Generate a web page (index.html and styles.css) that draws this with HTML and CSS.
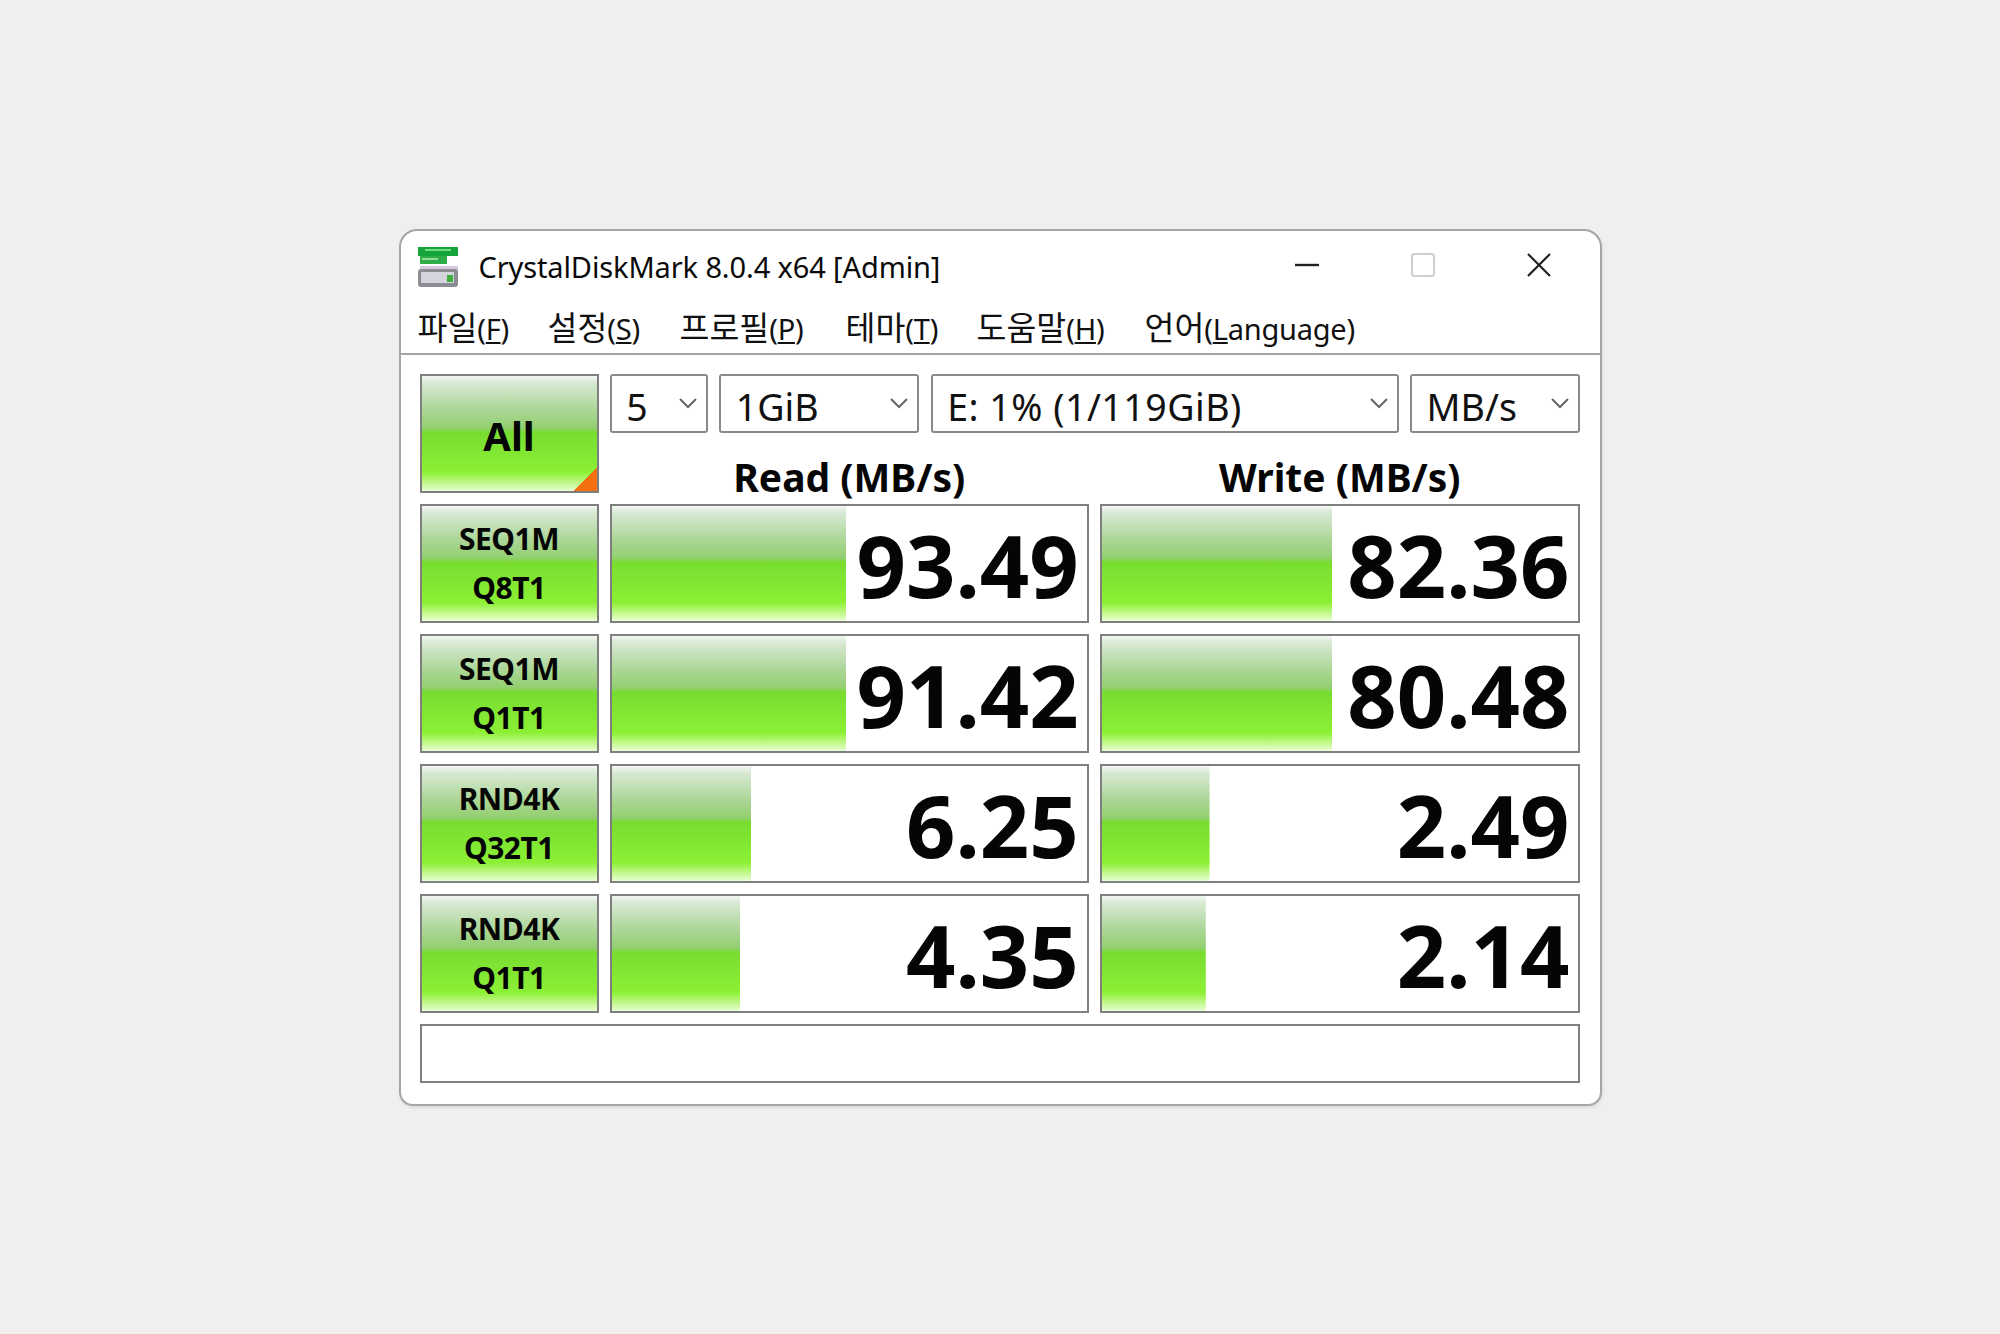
FILE: index.html
```html
<!DOCTYPE html>
<html lang="ko">
<head>
<meta charset="utf-8">
<title>CrystalDiskMark</title>
<link rel="stylesheet" href="styles.css">
</head>
<body>
<div class="window">
  <header class="titlebar">
    <svg class="app-icon" width="40" height="40" viewBox="0 0 40 40">
      <rect x="0" y="0" width="40" height="9" fill="#15a53a"/>
      <rect x="7" y="2" width="26" height="2" fill="#6fdc85"/>
      <rect x="2" y="9" width="27" height="8" fill="#2fae48"/>
      <rect x="4" y="11" width="16" height="2" fill="#8fdc98"/>
      <rect x="2" y="19" width="38" height="4" fill="#d8c8dc"/>
      <rect x="0" y="22" width="40" height="18" rx="3" fill="#8c8c94"/>
      <rect x="3" y="25" width="33" height="11" rx="1" fill="#d4d4dc"/>
      <rect x="29" y="28" width="6" height="7" fill="#3fae3f"/>
    </svg>
    <span class="title">CrystalDiskMark 8.0.4 x64 [Admin]</span>
    <div class="controls">
      <span class="ctl"><svg width="26" height="4" viewBox="0 0 26 4"><path d="M1 2H25" stroke="#222" stroke-width="2.4"/></svg></span>
      <span class="ctl"><svg width="26" height="26" viewBox="0 0 26 26"><rect x="2" y="2" width="22" height="22" rx="2.5" fill="none" stroke="#cfcfcf" stroke-width="2"/></svg></span>
      <span class="ctl"><svg width="26" height="26" viewBox="0 0 26 26"><path d="M2 2L24 24M24 2L2 24" stroke="#222" stroke-width="2.2" fill="none"/></svg></span>
    </div>
  </header>
  <nav class="menu">
    <span class="menu-item m1">파일<small>(<u>F</u>)</small></span>
    <span class="menu-item m2">설정<small>(<u>S</u>)</small></span>
    <span class="menu-item m3">프로필<small>(<u>P</u>)</small></span>
    <span class="menu-item m4">테마<small>(<u>T</u>)</small></span>
    <span class="menu-item m5">도움말<small>(<u>H</u>)</small></span>
    <span class="menu-item">언어<small>(<u>L</u>anguage)</small></span>
  </nav>
  <main class="panel">
    <div class="btn all">All</div>
    <div class="combos">
      <div class="combo c-count"><span>5</span><svg class="chev" width="20" height="12" viewBox="0 0 20 12"><path d="M2 2L10 10L18 2" fill="none" stroke="#666" stroke-width="2"/></svg></div>
      <div class="combo c-size"><span>1GiB</span><svg class="chev" width="20" height="12" viewBox="0 0 20 12"><path d="M2 2L10 10L18 2" fill="none" stroke="#666" stroke-width="2"/></svg></div>
      <div class="combo c-drive"><span>E: 1% (1/119GiB)</span><svg class="chev" width="20" height="12" viewBox="0 0 20 12"><path d="M2 2L10 10L18 2" fill="none" stroke="#666" stroke-width="2"/></svg></div>
      <div class="combo c-unit"><span>MB/s</span><svg class="chev" width="20" height="12" viewBox="0 0 20 12"><path d="M2 2L10 10L18 2" fill="none" stroke="#666" stroke-width="2"/></svg></div>
    </div>
    <div class="col-head">Read (MB/s)</div>
    <div class="col-head">Write (MB/s)</div>

    <div class="btn test">SEQ1M<br>Q8T1</div>
    <div class="cell" style="--fill:49.3%">93.49</div>
    <div class="cell" style="--fill:48.4%">82.36</div>

    <div class="btn test">SEQ1M<br>Q1T1</div>
    <div class="cell" style="--fill:49.3%">91.42</div>
    <div class="cell" style="--fill:48.4%">80.48</div>

    <div class="btn test">RND4K<br>Q32T1</div>
    <div class="cell" style="--fill:29.3%">6.25</div>
    <div class="cell" style="--fill:22.6%">2.49</div>

    <div class="btn test">RND4K<br>Q1T1</div>
    <div class="cell" style="--fill:27%">4.35</div>
    <div class="cell" style="--fill:21.8%">2.14</div>

    <div class="status"></div>
  </main>
</div>
</body>
</html>
```
FILE: styles.css
```css
:root {
  --glass: linear-gradient(180deg,
    #f2f7f2 0%, #d8e9d4 6%, #aed79a 28%, #93cf70 45%,
    #78dc30 49%, #80e632 65%, #8cf034 84%, #c4f88c 93%, #e8ffd4 100%);
}
* { box-sizing: border-box; }
html, body { height: 100%; }
body {
  margin: 0;
  background: #efefef;
  display: flex;
  align-items: center;
  justify-content: center;
  font-family: "Noto Sans", "Noto Sans CJK KR", sans-serif;
  color: #0a0a0a;
}
.window {
  width: 1203px;
  height: 877px;
  background: #fff;
  border: 2px solid #a6a6a6;
  border-radius: 18px 18px 14px 14px;
  box-shadow: 1px 2px 3px rgba(0, 0, 0, .08);
  display: flex;
  flex-direction: column;
  overflow: hidden;
}
.titlebar {
  height: 72px;
  flex: none;
  display: flex;
  align-items: center;
  padding-left: 17px;
}
.app-icon { flex: none; }
.title {
  margin-left: 21px;
  font-size: 29px;
  letter-spacing: -.12px;
  line-height: 40px;
  white-space: nowrap;
}
.controls { margin-left: auto; display: flex; padding-right: 3px; margin-top: -3px; }
.ctl {
  width: 116px;
  height: 50px;
  display: flex;
  align-items: center;
  justify-content: center;
}
.menu {
  height: 52px;
  flex: none;
  display: flex;
  align-items: center;
  padding: 0 0 4px 17px;
  border-bottom: 2px solid #a6a6a6;
  font-family: "Noto Sans CJK KR", "Noto Sans", sans-serif;
  font-size: 32.5px;
  color: #111;
}
.menu small {
  font-family: "Noto Sans", sans-serif;
  font-size: 29px;
  letter-spacing: -.25px;
}
.menu-item { white-space: nowrap; }
.m1 { width: 130px; }
.m2 { width: 132px; }
.m3 { width: 166px; }
.m4 { width: 131px; }
.m5 { width: 168px; }
.panel {
  flex: 1;
  display: grid;
  grid-template-columns: 179px 479px 479.5px;
  grid-template-rows: 59px 49px repeat(4, 119px) 59px;
  column-gap: 11.25px;
  row-gap: 11px;
  padding: 19px 0 0 19px;
}
.btn {
  border: 2px solid #7f7f7f;
  background: var(--glass);
  display: flex;
  align-items: center;
  justify-content: center;
  text-align: center;
  font-weight: 700;
  color: #050505;
}
.all {
  grid-row: 1 / span 2;
  grid-column: 1;
  padding-top: 4px;
  font-size: 40px;
  background:
    linear-gradient(135deg, transparent 50%, #f4700f 50%) right bottom / 23px 23px no-repeat,
    var(--glass);
}
.test {
  font-size: 30px;
  line-height: 49px;
  letter-spacing: -.5px;
}
.combos {
  grid-column: 2 / span 2;
  grid-row: 1;
  display: flex;
  gap: 11.5px;
}
.combo {
  height: 59px;
  border: 2px solid #8a8a8a;
  border-radius: 3px;
  display: flex;
  align-items: center;
  justify-content: space-between;
  padding: 0 8px 0 14.5px;
  font-size: 37.5px;
  color: #111;
  white-space: nowrap;
}
.combo span { margin-top: 7px; }
.chev { flex: none; }
.c-count { width: 98px; }
.c-size { width: 200px; }
.c-drive { width: 468px; letter-spacing: .5px; }
.c-unit { width: 169.5px; }
.col-head {
  text-align: center;
  font-weight: 700;
  font-size: 39px;
  line-height: 66px;
  height: 49px;
  color: #050505;
}
.cell {
  border: 2px solid #7f7f7f;
  background: var(--glass) left top / var(--fill) 100% no-repeat #fff;
  display: flex;
  align-items: center;
  justify-content: flex-end;
  padding: 2px 8px 0 0;
  font-weight: 700;
  font-size: 86.5px;
  color: #050505;
}
.status {
  grid-column: 1 / span 3;
  border: 2px solid #7f7f7f;
}
```
